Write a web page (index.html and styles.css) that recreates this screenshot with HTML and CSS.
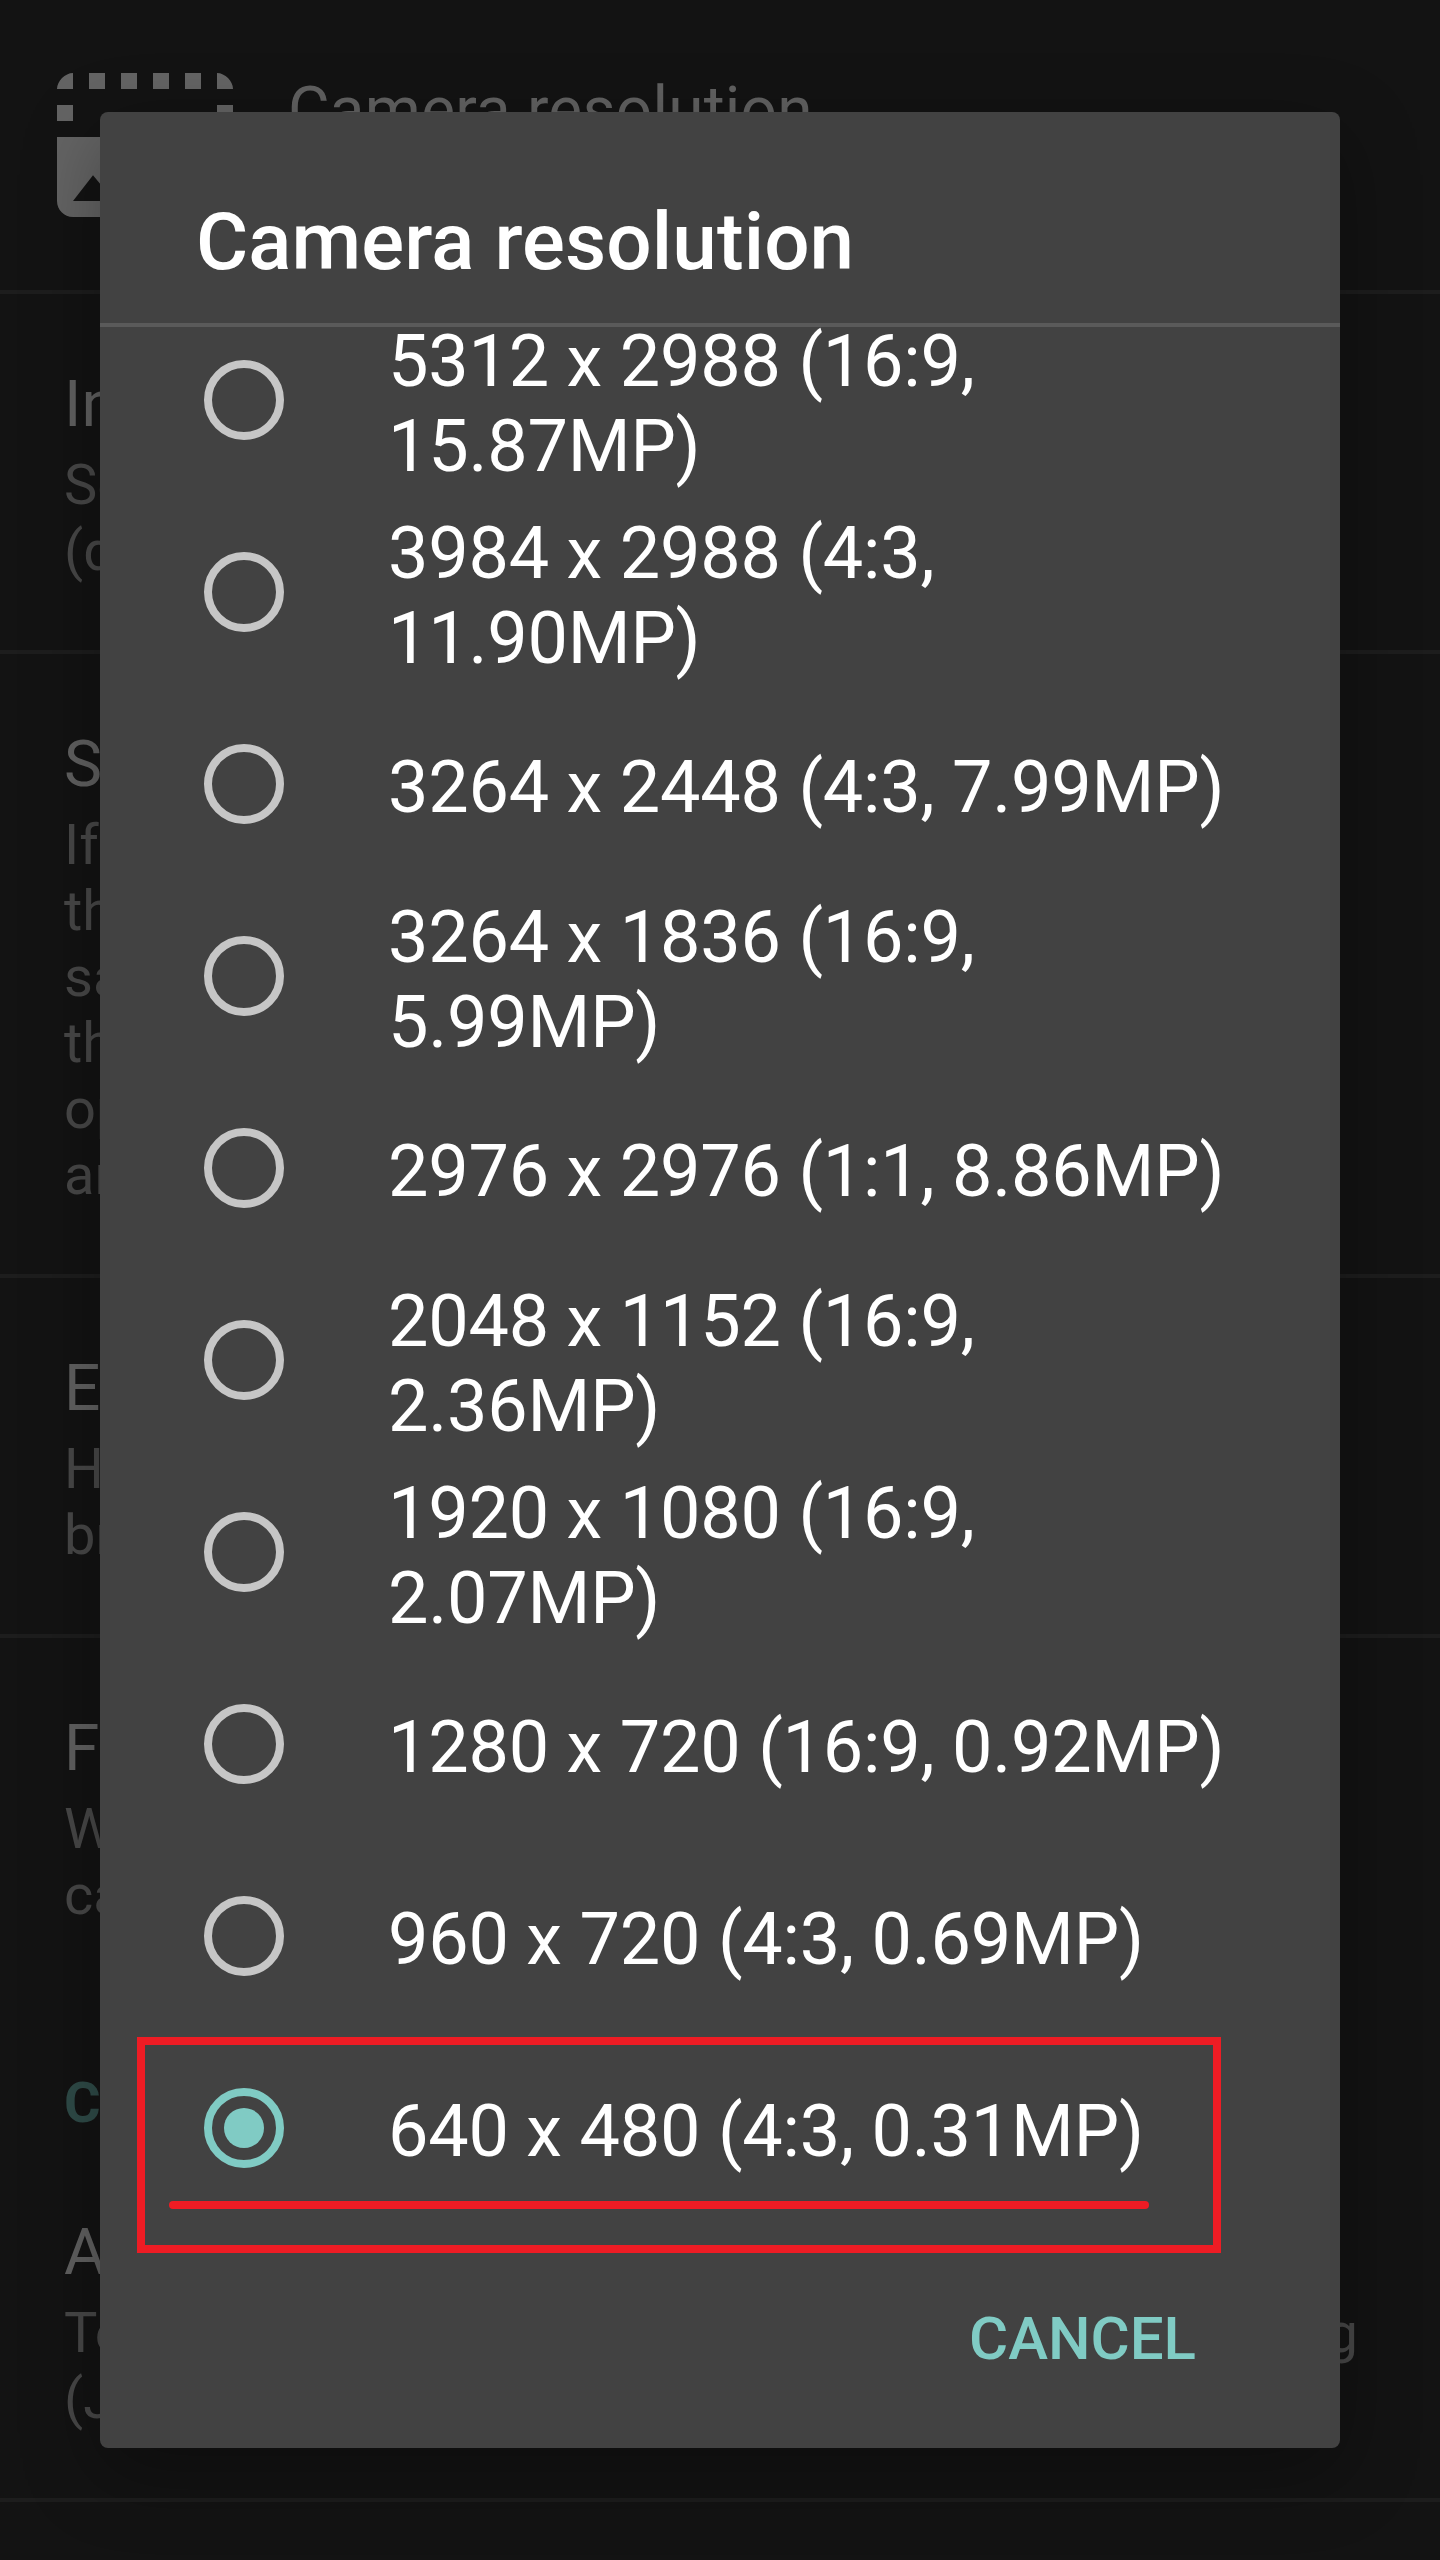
FILE: index.html
```html
<!DOCTYPE html>
<html lang="en">
<head>
<meta charset="utf-8">
<title>Camera resolution</title>
<link rel="stylesheet" href="styles.css">
</head>
<body>
<main class="screen">
  <section class="settings">
    <div class="pref pref-icon">
      <svg class="icon" viewBox="0 0 24 24"><path d="M21 15h2v2h-2v-2zm0-4h2v2h-2v-2zm2 8h-2v2c1 0 2-1 2-2zM13 3h2v2h-2V3zm8 4h2v2h-2V7zm0-4v2h2c0-1-1-2-2-2zM1 7h2v2H1V7zm16-4h2v2h-2V3zm0 16h2v2h-2v-2zM3 3C2 3 1 4 1 5h2V3zm6 0h2v2H9V3zM5 3h2v2H5V3zm-4 8v8c0 1.1.9 2 2 2h12V11H1zm2 8l2.5-3.21 1.79 2.15 2.5-3.22L13 19H3z"/></svg>
      <div class="pref-title">Camera resolution</div>
    </div>
    <div class="pref">
      <div class="pref-title">In</div>
      <div class="summary">Se<br>(d</div>
    </div>
    <div class="pref">
      <div class="pref-title">S</div>
      <div class="summary">If<br>th<br>sa<br>th<br>op<br>an</div>
    </div>
    <div class="pref">
      <div class="pref-title">E</div>
      <div class="summary">H<br>br</div>
    </div>
    <div class="pref pref-last">
      <div class="pref-title">F</div>
      <div class="summary">W<br>ca</div>
    </div>
    <h2 class="category">C</h2>
    <div class="pref">
      <div class="pref-title">A</div>
      <div class="summary"><div class="spread"><span>To</span><span>g</span></div>(J</div>
    </div>
  </section>

  <div class="dialog" role="dialog">
    <h1 class="dialog-title">Camera resolution</h1>
    <div class="list">
      <div class="options">
        <div class="option"><span class="radio"></span><span class="label">5312 x 2988 (16:9,<br>15.87MP)</span></div>
        <div class="option"><span class="radio"></span><span class="label">3984 x 2988 (4:3,<br>11.90MP)</span></div>
        <div class="option"><span class="radio"></span><span class="label">3264 x 2448 (4:3, 7.99MP)</span></div>
        <div class="option"><span class="radio"></span><span class="label">3264 x 1836 (16:9,<br>5.99MP)</span></div>
        <div class="option"><span class="radio"></span><span class="label">2976 x 2976 (1:1, 8.86MP)</span></div>
        <div class="option"><span class="radio"></span><span class="label">2048 x 1152 (16:9,<br>2.36MP)</span></div>
        <div class="option"><span class="radio"></span><span class="label">1920 x 1080 (16:9,<br>2.07MP)</span></div>
        <div class="option"><span class="radio"></span><span class="label">1280 x 720 (16:9, 0.92MP)</span></div>
        <div class="option"><span class="radio"></span><span class="label">960 x 720 (4:3, 0.69MP)</span></div>
        <div class="option"><span class="radio checked"></span><span class="label">640 x 480 (4:3, 0.31MP)</span></div>
      </div>
    </div>
    <div class="actions"><span class="cancel">CANCEL</span></div>
    <div class="mark-box"></div>
    <div class="mark-line"></div>
  </div>
</main>
</body>
</html>
```
FILE: styles.css
```css
* { box-sizing: border-box; }

body {
  margin: 0;
  background: #131313;
  font-family: Roboto, "Liberation Sans", sans-serif;
}

.screen {
  position: relative;
  width: 1440px;
  height: 2560px;
  overflow: hidden;
}

/* Dimmed settings list */
.pref {
  padding: 73px 82px 66px 64px;
  border-bottom: 4px solid #1d1d1d;
}

.pref-last { border-bottom: 0; }

.pref-icon {
  display: flex;
  gap: 47px;
  height: 294px;
  padding: 49px 0 0 49px;
}

.pref-icon .pref-title { margin-top: 24px; }

.icon {
  width: 192px;
  height: 192px;
  fill: #646464;
}

.pref-title {
  font-size: 64px;
  line-height: 76px;
  letter-spacing: .2px;
  color: #616161;
}

.summary {
  margin-top: 9px;
  font-size: 56px;
  line-height: 66px;
  color: #484848;
}

.spread {
  display: flex;
  justify-content: space-between;
}

.category {
  margin: 0;
  padding: 76px 64px 6px;
  font-size: 56px;
  font-weight: 700;
  line-height: 66px;
  color: #2f4b48;
}

/* Dialog */
.dialog {
  position: absolute;
  top: 112px;
  left: 100px;
  width: 1240px;
  height: 2336px;
  border-radius: 8px;
  background: #424242;
  box-shadow: 0 24px 80px rgba(0, 0, 0, .32);
}

.dialog-title {
  height: 215px;
  margin: 0;
  padding: 83px 96px 0;
  border-bottom: 4px solid #5a5a5a;
  font-size: 80px;
  font-weight: 500;
  line-height: 94px;
  letter-spacing: .1px;
  color: #fff;
}

.list {
  display: flex;
  flex-direction: column;
  justify-content: flex-end;
  height: 1897px;
}

.option {
  display: flex;
  align-items: center;
  gap: 104px;
  height: 192px;
  padding-left: 104px;
}

.radio {
  display: grid;
  place-items: center;
  flex: none;
  width: 80px;
  height: 80px;
  border: 8px solid #c6c6c6;
  border-radius: 50%;
}

.checked { border-color: #80cbc4; }

.checked::before {
  content: "";
  width: 40px;
  height: 40px;
  border-radius: 50%;
  background: #80cbc4;
}

.label {
  padding-top: 7px;
  font-size: 72px;
  line-height: 85px;
  letter-spacing: -.22px;
  white-space: nowrap;
  color: #fff;
}

.actions {
  display: flex;
  justify-content: flex-end;
  padding: 80px 144px 0 0;
}

.cancel {
  font-size: 60px;
  font-weight: 500;
  line-height: 70px;
  color: #80cbc4;
}

/* Red annotation over the selected row */
.mark-box {
  position: absolute;
  top: 1925px;
  left: 37px;
  width: 1084px;
  height: 216px;
  border: 8px solid #ee1c24;
}

.mark-line {
  position: absolute;
  top: 2089px;
  left: 69px;
  width: 980px;
  height: 8px;
  border-radius: 4px;
  background: #ee1c24;
}
```
